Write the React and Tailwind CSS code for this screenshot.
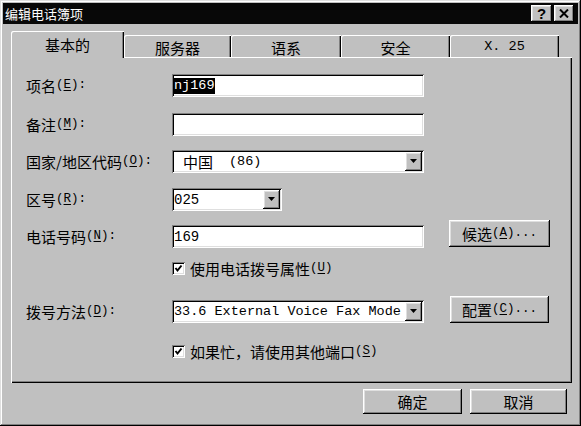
import React from "react";

const cjk = "font-['Noto_Sans_CJK_SC','Noto_Sans_CJK_JP',sans-serif]";
const mono = "font-['Liberation_Mono','DejaVu_Sans_Mono',monospace]";

const raised =
    "bg-[#c0c0c0] shadow-[inset_-1px_-1px_0_#000,inset_1px_1px_0_#fff,inset_-2px_-2px_0_#808080,inset_2px_2px_0_#dfdfdf]";
const sunken =
    "bg-white shadow-[inset_1px_1px_0_#808080,inset_-1px_-1px_0_#fff,inset_2px_2px_0_#000,inset_-2px_-2px_0_#dfdfdf]";

function Hotkey({ k, colon = false, dots = false }) {
    return (
        <span className={`${mono} text-[12.5px]`}>
            (<span className="underline underline-offset-2">{k}</span>){colon ? ":" : ""}
            {dots ? "..." : ""}
        </span>
    );
}

function Label({ text, k }) {
    return (
        <div className="w-[146px] shrink-0 flex items-center text-[15px] leading-none">
            <span>{text}</span>
            <Hotkey k={k} colon />
        </div>
    );
}

function Arrow() {
    return (
        <div className={`${raised} w-[17px] h-[19px] flex items-center justify-center shrink-0`}>
            <svg width="8" height="5" viewBox="0 0 8 5">
                <polygon points="0,0 7,0 3.5,4" fill="#000" />
            </svg>
        </div>
    );
}

function Check({ children }) {
    return (
        <div className="flex items-center h-[13px] ml-[146px]">
            <div className={`${sunken} w-[13px] h-[13px] flex items-center justify-center shrink-0`}>
                <svg width="9" height="9" viewBox="0 0 9 9">
                    <polyline points="1.5,4 3.5,6.5 7.5,1.5" fill="none" stroke="#000" strokeWidth="2" />
                </svg>
            </div>
            <div className="ml-[5px] text-[15px] leading-none flex items-center whitespace-nowrap">{children}</div>
        </div>
    );
}

const tabs = [
    { name: "服务器", w: "w-[107px]" },
    { name: "语系", w: "w-[110px]" },
    { name: "安全", w: "w-[109px]" },
    { name: "X. 25", w: "w-[109px]", mono: true },
];

export default function App() {
    return (
        <div
            className={`${cjk} w-[581px] h-[426px] bg-[#c0c0c0] p-[3px] flex flex-col text-black shadow-[inset_-1px_-1px_0_#000,inset_1px_1px_0_#dfdfdf,inset_-2px_-2px_0_#808080,inset_2px_2px_0_#fff]`}
        >
            {/* title bar */}
            <div className="h-[21px] bg-[#080808] flex items-center justify-between pl-[2px] pr-[4px] shrink-0">
                <span className="text-white text-[13px] leading-none">编辑电话簿项</span>
                <div className="flex gap-[2px]">
                    <div className={`${raised} w-[21px] h-[17px] flex items-center justify-center`}>
                        <span className="font-['Liberation_Sans',sans-serif] font-bold text-[15px] leading-none">?</span>
                    </div>
                    <div className={`${raised} w-[20px] h-[17px] flex items-center justify-center`}>
                        <svg width="10" height="9" viewBox="0 0 10 9">
                            <path d="M1 0.5 L9 8.5 M9 0.5 L1 8.5" stroke="#000" strokeWidth="2" />
                        </svg>
                    </div>
                </div>
            </div>

            <div className="pl-[8px] pt-[7px] flex flex-col">
                {/* tabs */}
                <div className="flex items-end h-[26px]">
                    <div className="relative z-10 w-[113px] h-[27px] -mb-[1px] bg-[#c0c0c0] flex items-center justify-center text-[15px] leading-none shadow-[inset_1px_1px_0_#fff,inset_-1px_0_0_#000,inset_-2px_0_0_#808080] rounded-tl-[2px]">
                        基本的
                    </div>
                    {tabs.map((t) => (
                        <div
                            key={t.name}
                            className={`${t.w} h-[22px] pt-[2px] flex items-center justify-center leading-none shadow-[inset_1px_1px_0_#fff,inset_-1px_0_0_#000,inset_-2px_0_0_#808080] rounded-tl-[2px] ${t.mono ? `${mono} text-[13.5px]` : "text-[15px]"}`}
                        >
                            {t.name}
                        </div>
                    ))}
                </div>

                {/* panel */}
                <div className="w-[561px] h-[326px] pl-[15px] pt-[17px] flex flex-col shadow-[inset_1px_1px_0_#fff,inset_-1px_-1px_0_#000,inset_-2px_-2px_0_#808080]">
                    <div className="flex items-center h-[23px]">
                        <Label text="项名" k="E" />
                        <div className={`${sunken} w-[252px] h-[23px] flex items-center pl-[2px]`}>
                            <span className={`${mono} text-[13.5px] leading-[16px] bg-black text-white`}>nj169</span>
                        </div>
                    </div>

                    <div className="flex items-center h-[23px] mt-[16px]">
                        <Label text="备注" k="M" />
                        <div className={`${sunken} w-[252px] h-[23px]`} />
                    </div>

                    <div className="flex items-center h-[23px] mt-[14px]">
                        <Label text="国家/地区代码" k="O" />
                        <div className={`${sunken} w-[252px] h-[23px] flex items-center justify-between p-[2px]`}>
                            <div className="flex items-center text-[15px] leading-none">
                                <span className="ml-[9px]">中国</span>
                                <span className={`${mono} text-[13.5px] ml-[16px]`}>(86)</span>
                            </div>
                            <Arrow />
                        </div>
                    </div>

                    <div className="flex items-center h-[23px] mt-[15px]">
                        <Label text="区号" k="R" />
                        <div className={`${sunken} w-[110px] h-[23px] flex items-center justify-between p-[2px]`}>
                            <span className={`${mono} text-[14px] leading-none`}>025</span>
                            <Arrow />
                        </div>
                    </div>

                    <div className="flex items-center h-[23px] mt-[14px]">
                        <Label text="电话号码" k="N" />
                        <div className={`${sunken} w-[252px] h-[23px] flex items-center pl-[2px]`}>
                            <span className={`${mono} text-[14px] leading-none`}>169</span>
                        </div>
                        <div className={`${raised} self-end mb-[1px] ml-[25px] w-[101px] h-[27px] flex items-center justify-center text-[15px] leading-none`}>
                            <span>候选</span>
                            <Hotkey k="A" dots />
                        </div>
                    </div>

                    <div className="mt-[14px]">
                        <Check>
                            <span>使用电话拨号属性</span>
                            <Hotkey k="U" />
                        </Check>
                    </div>

                    <div className="flex items-center h-[23px] mt-[25px]">
                        <Label text="拨号方法" k="D" />
                        <div className={`${sunken} w-[252px] h-[23px] flex items-center justify-between p-[2px]`}>
                            <span className={`${mono} text-[13.5px] leading-none whitespace-nowrap`}>
                                33.6 External Voice Fax Mode
                            </span>
                            <Arrow />
                        </div>
                        <div className={`${raised} self-end ml-[26px] w-[99px] h-[27px] flex items-center justify-center text-[15px] leading-none`}>
                            <span>配置</span>
                            <Hotkey k="C" dots />
                        </div>
                    </div>

                    <div className="mt-[22px]">
                        <Check>
                            <span>如果忙，请使用其他端口</span>
                            <Hotkey k="S" />
                        </Check>
                    </div>
                </div>

                {/* footer buttons */}
                <div className="w-[561px] flex justify-end gap-[8px] pr-[5px] mt-[6px]">
                    <div className={`${raised} w-[99px] h-[25px] flex items-center justify-center text-[15px] leading-none`}>确定</div>
                    <div className={`${raised} w-[97px] h-[25px] flex items-center justify-center text-[15px] leading-none`}>取消</div>
                </div>
            </div>
        </div>
    );
}
